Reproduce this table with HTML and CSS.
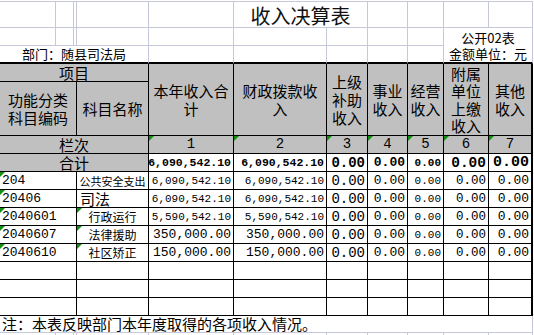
FILE: index.html
```html
<!DOCTYPE html>
<html lang="zh-CN">
<head>
<meta charset="utf-8">
<title>收入决算表</title>
<link rel="stylesheet" href="styles.css">
</head>
<body>
<div class="sheet">
  <!-- title row -->
  <div class="c gl top"></div>
  <div class="c gl top"></div>
  <div class="c gl top"></div>
  <div class="c gl top"></div>
  <div class="c gl top"></div>
  <div class="c gl top s2 title">收入决算表</div>
  <div class="c gl top"></div>
  <div class="c gl top"></div>
  <div class="c gl top"></div>
  <div class="c gl top"></div>

  <!-- row 2 -->
  <div class="c gl"></div>
  <div class="c gl"></div>
  <div class="c gl"></div>
  <div class="c gl"></div>
  <div class="c gl"></div>
  <div class="c gl"></div>
  <div class="c gl"></div>
  <div class="c gl"></div>
  <div class="c gl"></div>
  <div class="c gl nb s2 small">公开02表</div>

  <!-- row 3 -->
  <div class="c gl tb s4 small">部门：随县司法局</div>
  <div class="c gl tb"></div>
  <div class="c gl tb"></div>
  <div class="c gl tb"></div>
  <div class="c gl tb"></div>
  <div class="c gl tb"></div>
  <div class="c gl tb s2 small">金额单位：元</div>

  <!-- header -->
  <div class="c k h s4">项目</div>
  <div class="c k h rs2">本年收入合<br>计</div>
  <div class="c k h rs2">财政拨款收<br>入</div>
  <div class="c k h rs2">上级<br>补助<br>收入</div>
  <div class="c k h rs2">事业<br>收入</div>
  <div class="c k h rs2">经营<br>收入</div>
  <div class="c k h rs2 tight">附属<br>单位<br>上缴<br>收入</div>
  <div class="c k h rs2 re">其他<br>收入</div>
  <div class="c k h s3">功能分类<br>科目编码</div>
  <div class="c k h">科目名称</div>

  <!-- 栏次 -->
  <div class="c k h s4">栏次</div>
  <div class="c k h col tri">1</div>
  <div class="c k h col tri">2</div>
  <div class="c k h col tri">3</div>
  <div class="c k h col tri">4</div>
  <div class="c k h col tri">5</div>
  <div class="c k h col tri">6</div>
  <div class="c k h col tri re">7</div>

  <!-- 合计 -->
  <div class="c k h s4">合计</div>
  <div class="c k n b z115">6,090,542.10</div>
  <div class="c k n b z115">6,090,542.10</div>
  <div class="c k n b z14">0.00</div>
  <div class="c k n b z13">0.00</div>
  <div class="c k n b z11">0.00</div>
  <div class="c k n b z145">0.00</div>
  <div class="c k n b z15 re">0.00</div>

  <!-- data -->
  <div class="c k s3 code tri">204</div>
  <div class="c k name f11">公共安全支出</div>
  <div class="c k n z11">6,090,542.10</div>
  <div class="c k n z11">6,090,542.10</div>
  <div class="c k n z14">0.00</div>
  <div class="c k n z13">0.00</div>
  <div class="c k n z11">0.00</div>
  <div class="c k n z125">0.00</div>
  <div class="c k n z13 re">0.00</div>

  <div class="c k s3 code tri">20406</div>
  <div class="c k name left f15">司法</div>
  <div class="c k n z11">6,090,542.10</div>
  <div class="c k n z11">6,090,542.10</div>
  <div class="c k n z14">0.00</div>
  <div class="c k n z13">0.00</div>
  <div class="c k n z11">0.00</div>
  <div class="c k n z125">0.00</div>
  <div class="c k n z13 re">0.00</div>

  <div class="c k s3 code tri">2040601</div>
  <div class="c k name f12 tri">行政运行</div>
  <div class="c k n z11">5,590,542.10</div>
  <div class="c k n z11">5,590,542.10</div>
  <div class="c k n z14">0.00</div>
  <div class="c k n z13">0.00</div>
  <div class="c k n z11">0.00</div>
  <div class="c k n z125">0.00</div>
  <div class="c k n z13 re">0.00</div>

  <div class="c k s3 code tri">2040607</div>
  <div class="c k name f12 tri">法律援助</div>
  <div class="c k n z13">350,000.00</div>
  <div class="c k n z13">350,000.00</div>
  <div class="c k n z14">0.00</div>
  <div class="c k n z13">0.00</div>
  <div class="c k n z11">0.00</div>
  <div class="c k n z125">0.00</div>
  <div class="c k n z13 re">0.00</div>

  <div class="c k s3 code tri">2040610</div>
  <div class="c k name f12 tri">社区矫正</div>
  <div class="c k n z13">150,000.00</div>
  <div class="c k n z13">150,000.00</div>
  <div class="c k n z14">0.00</div>
  <div class="c k n z13">0.00</div>
  <div class="c k n z11">0.00</div>
  <div class="c k n z125">0.00</div>
  <div class="c k n z13 re">0.00</div>

  <div class="c k s3"></div><div class="c k"></div><div class="c k"></div><div class="c k"></div><div class="c k"></div><div class="c k"></div><div class="c k"></div><div class="c k"></div><div class="c k re"></div>
  <div class="c k s3"></div><div class="c k"></div><div class="c k"></div><div class="c k"></div><div class="c k"></div><div class="c k"></div><div class="c k"></div><div class="c k"></div><div class="c k re"></div>
  <div class="c k s3"></div><div class="c k"></div><div class="c k"></div><div class="c k"></div><div class="c k"></div><div class="c k"></div><div class="c k"></div><div class="c k"></div><div class="c k re"></div>

  <!-- footer -->
  <div class="c gl s11 foot">注：本表反映部门本年度取得的各项收入情况。</div>

  <!-- stubs -->
  <div class="c st"></div><div class="c st"></div><div class="c st"></div><div class="c st"></div><div class="c st"></div><div class="c st"></div><div class="c st"></div><div class="c st"></div><div class="c st"></div><div class="c st"></div><div class="c st"></div>
</div>
</body>
</html>
```

FILE: styles.css
```css
html, body {
  margin: 0;
  padding: 0;
  background: #fff;
}
body {
  font-family: "Noto Sans CJK SC", sans-serif;
  color: #000;
}
.sheet {
  display: grid;
  width: 533px;
  padding-top: 1px;
  grid-template-columns: 56px 18px 3px 72px 85px 93px 41px 40px 36px 45px 44px;
  grid-template-rows: 27px 18px 18px 18px 54px 18px 18px repeat(8, 18px) 17px 2px;
}
.c {
  box-sizing: border-box;
  display: flex;
  align-items: center;
  justify-content: center;
  text-align: center;
  position: relative;
  white-space: nowrap;
  min-width: 0;
}
.gl {
  border-right: 1px solid #c4c8d8;
  border-bottom: 1px solid #c4c8d8;
}
.top { border-top: 1px solid #c4c8d8; }
.nb { border-bottom: none; }
.tb { border-bottom: 2px solid #000; }
.k {
  border-right: 1px solid #000;
  border-bottom: 1px solid #000;
}
.re { border-right-width: 2px; }
.st { border-right: 1px solid #c4c8d8; }
.s2 { grid-column: span 2; }
.s3 { grid-column: span 3; }
.s4 { grid-column: span 4; }
.s11 { grid-column: span 11; }
.rs2 { grid-row: span 2; }

.title {
  font-size: 20px;
  line-height: 24px;
  color: #111;
  padding-top: 2px;
}
.small {
  font-size: 13px;
  line-height: 16px;
  align-items: flex-end;
}
.h {
  background: #c0c0c0;
  font-size: 15px;
  line-height: 18px;
}
.h.tight { line-height: 17.5px; }
.col {
  font-family: "Liberation Mono", monospace;
  font-size: 14px;
  align-items: flex-end;
  line-height: 17px;
}
.n {
  font-family: "Liberation Mono", monospace;
  justify-content: flex-end;
  align-items: flex-end;
  padding-right: 2px;
  line-height: 16px;
}
.b { font-weight: bold; }
.f11 { font-size: 11px; }
.f12 { font-size: 12px; }
.f15 { font-size: 15px; }
.z11 { font-size: 11px; }
.z115 { font-size: 11.5px; }
.z125 { font-size: 12.5px; }
.z13 { font-size: 13px; }
.z14 { font-size: 14px; }
.z145 { font-size: 14.5px; }
.z15 { font-size: 15px; }
.code {
  font-family: "Liberation Mono", monospace;
  font-size: 13px;
  line-height: 16px;
  justify-content: flex-start;
  align-items: flex-end;
  padding-left: 2px;
}
.name {
  line-height: 16px;
  align-items: flex-end;
}
.name.left {
  justify-content: flex-start;
  padding-left: 3px;
}
.foot {
  font-size: 15px;
  line-height: 17px;
  justify-content: flex-start;
  align-items: flex-end;
  padding-left: 2px;
}
.tri::before {
  content: "";
  position: absolute;
  left: 0;
  top: 0;
  border-top: 5px solid #119111;
  border-right: 5px solid transparent;
}
```
